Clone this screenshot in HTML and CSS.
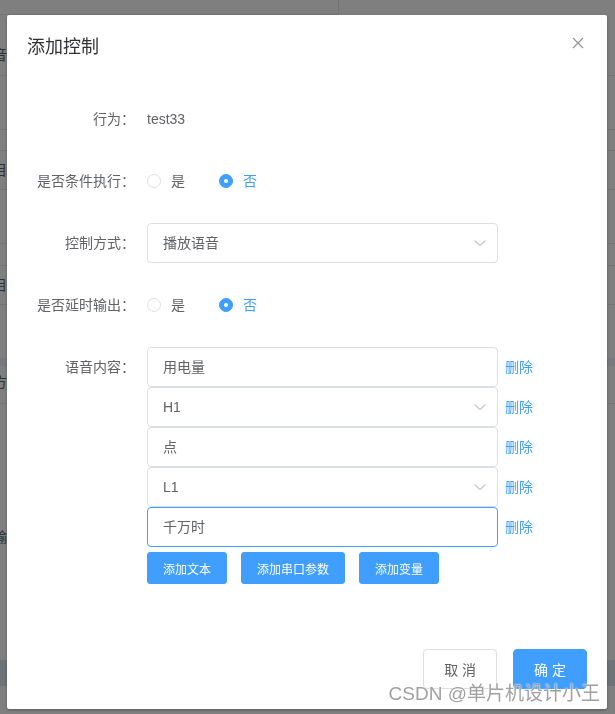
FILE: index.html
```html
<!DOCTYPE html>
<html>
<head lang="zh">
    <meta charset="UTF-8">
    <title>添加控制</title>
    <link rel="stylesheet" href="styles.css">
</head>
<body>
<div class="page">
    <div class="row r1"></div>
    <div class="row r2"><span>音</span></div>
    <div class="row r3"></div>
    <div class="row r4"></div>
    <div class="row r5"><span>目</span></div>
    <div class="row r6"></div>
    <div class="row r7"></div>
    <div class="row r8"><span>目</span></div>
    <div class="row r8b"></div>
    <div class="row r9 band"></div>
    <div class="row r10"><span>方</span></div>
    <div class="row r11"><span>输</span></div>
    <div class="row r12 band dark"></div>
</div>

<div class="mask"></div>

<div class="dialog">
    <div class="dialog-header">
        <span class="dialog-title">添加控制</span>
        <svg class="dialog-close" width="16" height="16" viewBox="0 0 16 16">
            <path d="M3 3L13 13M13 3L3 13" stroke="#909399" stroke-width="1.2" fill="none"/>
        </svg>
    </div>
    <div class="dialog-body">
        <div class="form-item">
            <label class="form-label">行为：</label>
            <div class="form-content">test33</div>
        </div>
        <div class="form-item">
            <label class="form-label">是否条件执行：</label>
            <div class="form-content radios">
                <span class="radio"><em></em>是</span>
                <span class="radio checked"><em></em>否</span>
            </div>
        </div>
        <div class="form-item">
            <label class="form-label">控制方式：</label>
            <div class="form-content">
                <div class="input select">
                    <span>播放语音</span>
                    <svg width="14" height="14" viewBox="0 0 14 14"><path d="M1.5 4.5L7 9.5L12.5 4.5" stroke="#c0c4cc" stroke-width="1.1" fill="none"/></svg>
                </div>
            </div>
        </div>
        <div class="form-item">
            <label class="form-label">是否延时输出：</label>
            <div class="form-content radios">
                <span class="radio"><em></em>是</span>
                <span class="radio checked"><em></em>否</span>
            </div>
        </div>
        <div class="form-item">
            <label class="form-label">语音内容：</label>
            <div class="form-content">
                <div class="voice-row">
                    <div class="input"><span>用电量</span></div>
                    <a class="del">删除</a>
                </div>
                <div class="voice-row">
                    <div class="input select">
                        <span>H1</span>
                        <svg width="14" height="14" viewBox="0 0 14 14"><path d="M1.5 4.5L7 9.5L12.5 4.5" stroke="#c0c4cc" stroke-width="1.1" fill="none"/></svg>
                    </div>
                    <a class="del">删除</a>
                </div>
                <div class="voice-row">
                    <div class="input"><span>点</span></div>
                    <a class="del">删除</a>
                </div>
                <div class="voice-row">
                    <div class="input select">
                        <span>L1</span>
                        <svg width="14" height="14" viewBox="0 0 14 14"><path d="M1.5 4.5L7 9.5L12.5 4.5" stroke="#c0c4cc" stroke-width="1.1" fill="none"/></svg>
                    </div>
                    <a class="del">删除</a>
                </div>
                <div class="voice-row">
                    <div class="input focus"><span>千万时</span></div>
                    <a class="del">删除</a>
                </div>
                <div class="add-btns">
                    <button class="btn primary small">添加文本</button>
                    <button class="btn primary small">添加串口参数</button>
                    <button class="btn primary small">添加变量</button>
                </div>
            </div>
        </div>
    </div>
    <div class="dialog-footer">
        <button class="btn">取 消</button>
        <button class="btn primary">确 定</button>
    </div>
</div>

<div class="watermark">CSDN @单片机设计小王</div>
</body>
</html>
```

FILE: styles.css
```css
* {
    margin: 0;
    padding: 0;
    box-sizing: border-box;
}

body {
    width: 615px;
    height: 714px;
    overflow: hidden;
    background: #fff;
    font-family: "Liberation Sans", "Noto Sans CJK SC", sans-serif;
    font-size: 14px;
    color: #606266;
}

/* page behind the mask */
.page {
    width: 615px;
}

.page .row {
    border-bottom: 1px solid #e8e8e8;
    font-size: 14px;
    color: #606266;
    overflow: hidden;
    white-space: nowrap;
}

.page .row span {
    display: block;
    margin-left: -7px;
    line-height: 20px;
}

.page .band {
    background: #eef3fa;
    border-bottom: 0;
}

.page .band.dark {
    background: #dde6f0;
}

.r1 { height: 15px; border-right: 1px solid #e8e8e8; width: 339px; }
.r2 { height: 61px; padding-top: 30px; }
.r3 { height: 54px; }
.r4 { height: 21px; }
.r5 { height: 39px; padding-top: 9px; }
.r6 { height: 54px; }
.r7 { height: 22px; }
.r8 { height: 39px; padding-top: 9px; }
.r8b { height: 53px; border-bottom: 0 !important; }
.r9 { height: 8px; }
.r10 { height: 38px; padding-top: 6px; }
.r11 { height: 256px; padding-top: 123px; border-bottom: 0 !important; }
.r12 { height: 26px; }

.mask {
    position: fixed;
    left: 0;
    top: 0;
    right: 0;
    bottom: 0;
    background: rgba(0, 0, 0, .5);
}

/* dialog */
.dialog {
    position: fixed;
    left: 7px;
    top: 15px;
    width: 600px;
    background: #fff;
    border-radius: 2px;
    box-shadow: 0 1px 3px rgba(0, 0, 0, .3);
}

.dialog-header {
    position: relative;
    padding: 20px 20px 10px;
}

.dialog-title {
    display: block;
    font-size: 18px;
    line-height: 24px;
    color: #303133;
}

.dialog-close {
    position: absolute;
    top: 20px;
    right: 21px;
}

.dialog-body {
    padding: 30px 20px;
}

.form-item {
    display: flex;
    margin-bottom: 22px;
}

.form-item:last-child {
    margin-bottom: 25px;
}

.form-label {
    width: 120px;
    flex: none;
    padding-right: 12px;
    text-align: right;
    line-height: 40px;
}

.form-content {
    flex: 1;
    line-height: 40px;
}

.radios {
    display: flex;
    align-items: center;
}

.radio {
    display: flex;
    align-items: center;
    margin-right: 34px;
    line-height: 1;
}

.radio em {
    width: 14px;
    height: 14px;
    margin-right: 10px;
    border: 1px solid #dcdfe6;
    border-radius: 50%;
    background: #fff;
    display: flex;
    align-items: center;
    justify-content: center;
}

.radio.checked {
    color: #409eff;
}

.radio.checked em {
    border-color: #409eff;
    background: #409eff;
}

.radio.checked em:after {
    content: "";
    width: 4px;
    height: 4px;
    border-radius: 50%;
    background: #fff;
}

.input {
    width: 351px;
    height: 40px;
    padding: 0 10px 0 15px;
    border: 1px solid #dcdfe6;
    border-radius: 4px;
    background: #fff;
    display: flex;
    align-items: center;
    justify-content: space-between;
    line-height: 38px;
    color: #606266;
}

.input.focus {
    border-color: #409eff;
}

.voice-row {
    display: flex;
    align-items: center;
}

.del {
    margin-left: 7px;
    color: #409eff;
    cursor: pointer;
}

.add-btns {
    display: flex;
    gap: 14px;
    margin-top: 5px;
    line-height: 1;
}

.btn {
    font-family: "Liberation Sans", "Noto Sans CJK SC", sans-serif;
    height: 40px;
    padding: 0 20px;
    font-size: 14px;
    border: 1px solid #dcdfe6;
    border-radius: 4px;
    background: #fff;
    color: #606266;
}

.btn.primary {
    background: #409eff;
    border-color: #409eff;
    color: #fff;
}

.btn.small {
    height: 32px;
    padding: 0 15px;
    font-size: 12px;
    border-radius: 3px;
}

.dialog-footer {
    display: flex;
    justify-content: flex-end;
    gap: 16px;
    padding: 10px 20px 20px;
}

.watermark {
    position: fixed;
    right: 15px;
    bottom: 8px;
    font-size: 19px;
    line-height: 24px;
    color: rgba(120, 120, 120, .7);
    text-shadow: 0 0 2px #fff, 0 0 1px #fff;
    white-space: nowrap;
}
```
